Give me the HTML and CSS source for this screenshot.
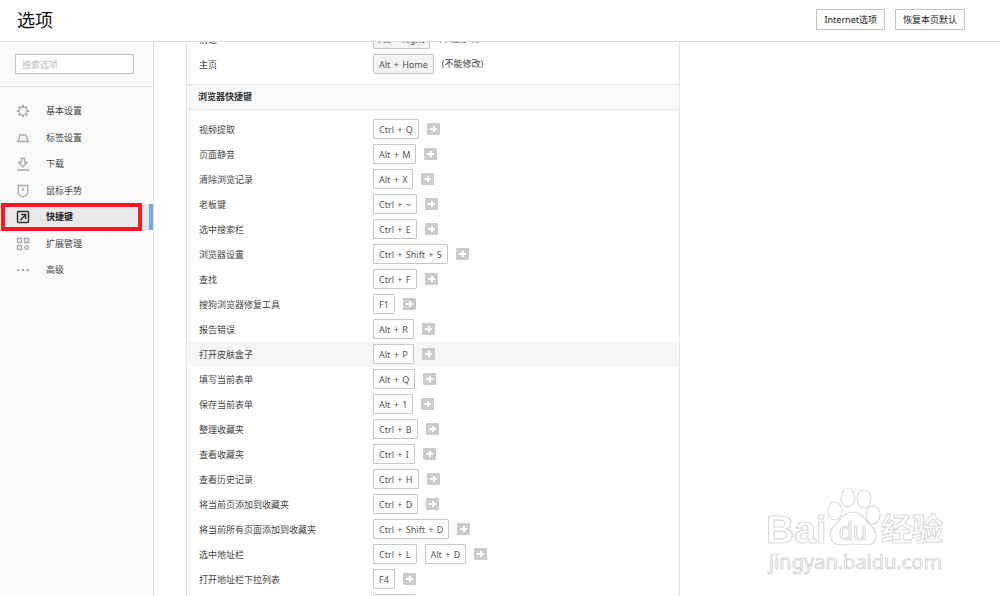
FILE: index.html
```html
<!DOCTYPE html>
<html lang="zh-CN">
<head>
<meta charset="utf-8">
<title>选项</title>
<link rel="stylesheet" href="styles.css">
</head>
<body>
<header class="topbar">
  <h1>选项</h1>
  <div class="actions">
    <button type="button" class="btn">Internet选项</button>
    <button type="button" class="btn">恢复本页默认</button>
  </div>
</header>
<div class="layout">
  <aside class="sidebar">
    <div class="search"><input type="search" placeholder="搜索选项" aria-label="搜索选项"></div>
    <nav class="nav">
      <a href="#basic"><svg viewBox="0 0 14 14"><circle cx="7" cy="7" r="4"/><path d="M7 .8v2.200M7 11v2.200M.8 7H3M11 7h2.200M2.600 2.600l1.500 1.500M9.900 9.900l1.500 1.500M11.400 2.600L9.900 4.100M4.100 9.900l-1.500 1.500" stroke-width="1.800"/></svg>基本设置</a>
      <a href="#tabs"><svg viewBox="0 0 14 14"><path d="M.6 10.500h12.800M2.500 10l1.400-6h6.200l1.400 6"/></svg>标签设置</a>
      <a href="#download"><svg viewBox="0 0 14 14"><path d="M5.300 1.500h3.400v4h2.500L7 9.800 2.800 5.500h2.500zM1 13h12"/></svg>下载</a>
      <a href="#gesture"><svg viewBox="0 0 14 14"><path d="M2.300 1.500h9.400v6.700c0 2.500-2.200 3.900-4.700 4.700-2.500-.8-4.700-2.200-4.700-4.700zM7 3.500V7"/></svg>鼠标手势</a>
      <a href="#keys" class="current" aria-current="page"><svg viewBox="0 0 14 14"><rect x="1.500" y="1.500" width="11" height="11" rx="1"/><path d="M4.200 10.200l5.200-5.200M5 4.500h4.600v4.600"/></svg>快捷键</a>
      <a href="#extensions"><svg viewBox="0 0 14 14"><path d="M1.500 1.500h4v4h-4zM8.500 1.500h4v4h-4zM1.500 8.500h4v4h-4z"/><circle cx="10.500" cy="10.500" r="1.900"/></svg>扩展管理</a>
      <a href="#advanced"><svg viewBox="0 0 14 14"><path d="M1.200 7h2.200M5.900 7h2.200M10.600 7h2.200" stroke-width="2"/></svg>高级</a>
    </nav>
  </aside>
  <main class="content">
    <div class="panel">
      <ul class="rows fixed">
        <li><span>前进</span><div><kbd>Alt <i>+</i> Right</kbd><small>(不能修改)</small></div></li>
        <li><span>主页</span><div><kbd>Alt <i>+</i> Home</kbd><small>(不能修改)</small></div></li>
      </ul>
      <h2>浏览器快捷键</h2>
      <ul class="rows">
        <li><span>视频提取</span><div><kbd>Ctrl <i>+</i> Q</kbd><button type="button" class="add" aria-label="添加"></button></div></li>
        <li><span>页面静音</span><div><kbd>Alt <i>+</i> M</kbd><button type="button" class="add" aria-label="添加"></button></div></li>
        <li><span>清除浏览记录</span><div><kbd>Alt <i>+</i> X</kbd><button type="button" class="add" aria-label="添加"></button></div></li>
        <li><span>老板键</span><div><kbd>Ctrl <i>+</i> ~</kbd><button type="button" class="add" aria-label="添加"></button></div></li>
        <li><span>选中搜索栏</span><div><kbd>Ctrl <i>+</i> E</kbd><button type="button" class="add" aria-label="添加"></button></div></li>
        <li><span>浏览器设置</span><div><kbd>Ctrl <i>+</i> Shift <i>+</i> S</kbd><button type="button" class="add" aria-label="添加"></button></div></li>
        <li><span>查找</span><div><kbd>Ctrl <i>+</i> F</kbd><button type="button" class="add" aria-label="添加"></button></div></li>
        <li><span>搜狗浏览器修复工具</span><div><kbd>F1</kbd><button type="button" class="add" aria-label="添加"></button></div></li>
        <li><span>报告错误</span><div><kbd>Alt <i>+</i> R</kbd><button type="button" class="add" aria-label="添加"></button></div></li>
        <li class="hovered"><span>打开皮肤盒子</span><div><kbd>Alt <i>+</i> P</kbd><button type="button" class="add" aria-label="添加"></button></div></li>
        <li><span>填写当前表单</span><div><kbd>Alt <i>+</i> Q</kbd><button type="button" class="add" aria-label="添加"></button></div></li>
        <li><span>保存当前表单</span><div><kbd>Alt <i>+</i> 1</kbd><button type="button" class="add" aria-label="添加"></button></div></li>
        <li><span>整理收藏夹</span><div><kbd>Ctrl <i>+</i> B</kbd><button type="button" class="add" aria-label="添加"></button></div></li>
        <li><span>查看收藏夹</span><div><kbd>Ctrl <i>+</i> I</kbd><button type="button" class="add" aria-label="添加"></button></div></li>
        <li><span>查看历史记录</span><div><kbd>Ctrl <i>+</i> H</kbd><button type="button" class="add" aria-label="添加"></button></div></li>
        <li><span>将当前页添加到收藏夹</span><div><kbd>Ctrl <i>+</i> D</kbd><button type="button" class="add" aria-label="添加"></button></div></li>
        <li><span>将当前所有页面添加到收藏夹</span><div><kbd>Ctrl <i>+</i> Shift <i>+</i> D</kbd><button type="button" class="add" aria-label="添加"></button></div></li>
        <li><span>选中地址栏</span><div><kbd>Ctrl <i>+</i> L</kbd><kbd>Alt <i>+</i> D</kbd><button type="button" class="add" aria-label="添加"></button></div></li>
        <li><span>打开地址栏下拉列表</span><div><kbd>F4</kbd><button type="button" class="add" aria-label="添加"></button></div></li>
        <li><span></span><div><kbd class="blank"></kbd></div></li>
      </ul>
    </div>
  </main>
</div>
<svg class="watermark" viewBox="0 0 190 96" role="img" aria-label="Baidu经验">
  <text class="brand" x="6" y="54" font-size="39">Bai</text>
  <ellipse cx="75" cy="22" rx="7" ry="9"/>
  <ellipse cx="88" cy="9" rx="7" ry="9"/>
  <ellipse cx="104" cy="10" rx="7" ry="9"/>
  <ellipse cx="113" cy="26" rx="7" ry="9"/>
  <path d="M93 23c9 0 12 8 17 13 10 8 7 20-4 20-5 0-8-1-13-1s-8 1-12 1c-12 0-14-13-6-20 6-5 9-13 18-13z"/>
  <text class="du" x="79" y="51" font-size="25">du</text>
  <text class="cn" x="121" y="51" font-size="31">经验</text>
  <text class="site" x="9" y="80" font-size="20">jingyan.baidu.com</text>
</svg>
</body>
</html>
```
FILE: styles.css
```css
* { box-sizing: border-box; }
body {
  margin: 0;
  height: 100vh;
  display: flex;
  flex-direction: column;
  overflow: hidden;
  background: #fff;
  color: #444;
  font: 9px/12px "Noto Sans", "Noto Sans CJK SC", sans-serif;
}
.topbar {
  flex: none;
  height: 42px;
  padding: 0 35px 2px 17px;
  display: flex;
  align-items: center;
  justify-content: space-between;
  border-bottom: 1px solid #ddd;
}
h1 { margin: 0; font-size: 18px; line-height: 24px; font-weight: 400; color: #111; }
.actions { display: flex; gap: 10px; }
.btn {
  height: 21px;
  padding: 0 7px;
  border: 1px solid #c4c4c4;
  background: #fff;
  color: #222;
  font: inherit;
}
.layout { flex: 1; min-height: 0; display: flex; }
.sidebar {
  flex: none;
  width: 154px;
  background: #fafafa;
  border-right: 1px solid #ddd;
}
.search { padding: 12px 19px 12px 15px; border-bottom: 1px solid #e2e2e2; }
.search input {
  display: block;
  width: 100%;
  height: 20px;
  padding: 0 6px;
  border: 1px solid #c4c4c4;
  border-radius: 0;
  background: #fff;
  font: inherit;
  appearance: none;
}
.search input::placeholder { color: #bbb; }
.nav {
  height: 185px;
  margin-top: 11px;
  display: flex;
  flex-direction: column;
  justify-content: space-between;
}
.nav a {
  position: relative;
  height: 26px;
  padding-left: 16px;
  display: flex;
  align-items: center;
  gap: 16px;
  color: #444;
  text-decoration: none;
}
.nav svg { width: 14px; height: 14px; fill: none; stroke: #aaa; stroke-width: 1.3; }
.nav .current {
  background: #e8e8e8;
  border-right: 4px solid #77a8e6;
  color: #222;
  font-weight: 700;
}
.nav .current svg { stroke: #333; stroke-width: 1.5; }
.nav .current::after {
  content: "";
  position: absolute;
  inset: -1px 7px -1px 1px;
  border: 4px solid #ee1c24;
}
.content { flex: 1; min-width: 0; overflow: hidden; padding: 0 32px; }
.panel {
  max-width: 494px;
  margin-top: -15px;
  border: 1px solid #e4e4e4;
  border-top: 0;
}
.rows { margin: 0; padding: 8px 0; list-style: none; }
.fixed { padding: 0 0 7px; }
.fixed kbd { background: #f3f3f3; }
.rows li {
  height: 25px;
  padding: 2px 0 0 12px;
  display: grid;
  grid-template-columns: 174px 1fr;
  align-items: start;
  line-height: 20px;
}
.rows span { line-height: 22px; }
.rows div { display: flex; align-items: center; gap: 8px; }
.rows .hovered { background: #f6f6f6; }
kbd {
  height: 20px;
  padding: 0 5px;
  border: 1px solid #c8c8c8;
  border-radius: 1px;
  background: #fff;
  color: #555;
  font: inherit;
  line-height: 20px;
  white-space: pre;
}
kbd i { margin: 0 1px; font-style: normal; }
kbd.blank { width: 42px; }
small { font-size: 9px; }
h2 {
  margin: 0;
  height: 26px;
  padding-left: 11px;
  border: solid #e8e8e8;
  border-width: 1px 0;
  background: #fafafa;
  color: #333;
  font-size: 9px;
  line-height: 24px;
}
h2 + .rows { padding-top: 7px; }
.add {
  width: 13px;
  height: 12px;
  padding: 0;
  border: 0;
  border-radius: 1px;
  background:
    linear-gradient(#fff, #fff) 3px 5px / 7px 2px no-repeat,
    linear-gradient(#fff, #fff) 6px 3px / 2px 6px no-repeat,
    #ccc;
}
.watermark {
  position: fixed;
  right: 50px;
  bottom: 11px;
  width: 190px;
  height: 96px;
  fill: #fff;
  stroke: #dcdcdc;
  stroke-width: 1.2;
  overflow: visible;
}
.brand { font-family: "Liberation Sans", sans-serif; font-weight: 700; }
.du { font-family: "Liberation Sans", sans-serif; }
.cn { font-family: "Noto Sans CJK SC", sans-serif; font-weight: 700; }
.site { font-family: "Noto Sans", sans-serif; }
```
